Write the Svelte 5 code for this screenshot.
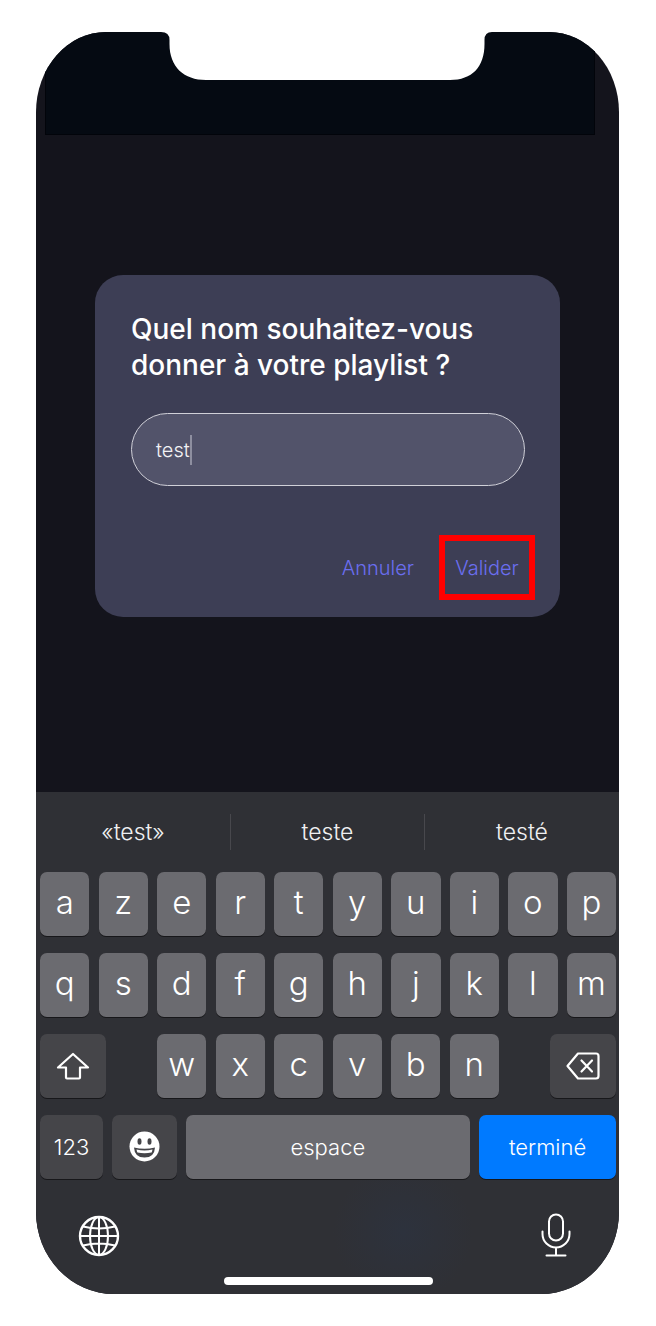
<script>
	const row1 = ['a', 'z', 'e', 'r', 't', 'y', 'u', 'i', 'o', 'p'];
	const row2 = ['q', 's', 'd', 'f', 'g', 'h', 'j', 'k', 'l', 'm'];
	const row3 = ['w', 'x', 'c', 'v', 'b', 'n'];
</script>

<div class="phone">
	<div class="status"></div>
	<svg class="notch" width="583" height="50" viewBox="0 0 583 50">
		<path d="M125 0Q133.500 0 133.500 8V12C133.500 35 148 48 170 48H414C436 48 448.500 35 448.500 12V8Q448.500 0 456 0Z" fill="#fff" />
	</svg>

	<main class="content">
		<section class="dialog">
			<h1>Quel nom souhaitez-vous<br />donner à votre playlist ?</h1>
			<div class="field"><span>test</span><i class="caret"></i></div>
			<div class="actions">
				<button type="button" class="annuler">Annuler</button>
				<button type="button" class="valider">Valider</button>
			</div>
		</section>
	</main>

	<footer class="keyboard">
		<div class="suggestions">
			<span>«test»</span>
			<span class="mid">teste</span>
			<span>testé</span>
		</div>

		<div class="rows">
			<div class="row">
				{#each row1 as k}
					<div class="key">{k}</div>
				{/each}
			</div>
			<div class="row">
				{#each row2 as k}
					<div class="key">{k}</div>
				{/each}
			</div>
			<div class="row between">
				<div class="key dark wide">
					<svg width="34" height="28" viewBox="0 0 34 28" fill="none" stroke="#fff" stroke-width="2.200" stroke-linejoin="round">
						<path d="M17 2 2 15.500H10V25.500Q10 26.500 11 26.500H23Q24 26.500 24 25.500V15.500H32Z" />
					</svg>
				</div>
				<div class="letters">
					{#each row3 as k}
						<div class="key">{k}</div>
					{/each}
				</div>
				<div class="key dark wide">
					<svg width="34" height="28" viewBox="0 0 34 28" fill="none" stroke="#fff" stroke-width="2.200" stroke-linejoin="round" stroke-linecap="round">
						<path d="M12 1.500H30Q32.500 1.500 32.500 4V24Q32.500 26.500 30 26.500H12L1.500 14Z" />
						<path d="M15.500 8.500 26 19.500M26 8.500 15.500 19.500" />
					</svg>
				</div>
			</div>
			<div class="row bottom">
				<div class="key dark small num">123</div>
				<div class="key dark emoji">
					<svg width="31" height="31" viewBox="0 0 31 31">
						<circle cx="15.500" cy="15.500" r="15" fill="#fff" />
						<ellipse cx="10.500" cy="10.500" rx="2" ry="3.200" fill="#454549" />
						<ellipse cx="20.500" cy="10.500" rx="2" ry="3.200" fill="#454549" />
						<path d="M5 16.500Q15.500 19 26 16.500Q25.500 26.500 15.500 26.500Q5.500 26.500 5 16.500Z" fill="#454549" />
						<path d="M7.500 18.500Q15.500 20.500 23.500 18.500Q23 21 22.500 21.500Q15.500 23 8.500 21.500Q8 21 7.500 18.500Z" fill="#fff" />
					</svg>
				</div>
				<div class="key small space">espace</div>
				<div class="key small done">terminé</div>
			</div>
		</div>

		<div class="tools">
			<svg width="42" height="42" viewBox="0 0 42 42" fill="none" stroke="#fff" stroke-width="2">
				<circle cx="21" cy="21" r="19" stroke-width="2.400" />
				<ellipse cx="21" cy="21" rx="9" ry="19" />
				<path d="M21 2V40M2 21H40M5 11.500Q21 15.500 37 11.500M5 30.500Q21 26.500 37 30.500" />
			</svg>
			<svg width="30" height="44" viewBox="0 0 30 44" fill="none" stroke="#fff" stroke-width="2" stroke-linecap="round">
				<rect x="8" y="1.500" width="14" height="26" rx="7" />
				<path d="M1.500 18.500V21A13.500 13.500 0 0 0 28.500 21V18.500M15 34.500V42M5.500 42.500H24.500" />
			</svg>
		</div>
		<div class="home"></div>
	</footer>
</div>

<style>
	:global(body) {
		background: #fff;
	}

	.phone {
		position: relative;
		display: flex;
		flex-direction: column;
		width: 583px;
		height: 1262px;
		margin: 32px 0 0 36px;
		background: #14141c;
		border-radius: 70px 70px 78px 78px / 80px 80px 82px 82px;
		overflow: hidden;
		font-family: Inter, 'Liberation Sans', sans-serif;
	}

	.status {
		flex: none;
		height: 103px;
		margin: 0 24px 0 9px;
		background: #050a12;
		border: 1px solid #02040a;
		border-top: none;
		box-sizing: border-box;
	}

	.notch {
		position: absolute;
		top: 0;
		left: 0;
	}

	.content {
		flex: 1;
		padding: 140px 0 0 59px;
	}

	.dialog {
		box-sizing: border-box;
		width: 465px;
		height: 342px;
		padding: 36px 36px 0;
		background: #3d3e55;
		border-radius: 28px;
	}

	h1 {
		margin: 0;
		color: #fff;
		font-size: 28px;
		font-weight: 500;
		line-height: 36px;
		white-space: nowrap;
	}

	.field {
		display: flex;
		align-items: center;
		box-sizing: border-box;
		width: 394px;
		height: 73px;
		margin-top: 30px;
		padding-left: 24px;
		background: #52536a;
		border: 1px solid #d0d0d8;
		border-radius: 37px;
		color: #f2f2f5;
		font-size: 20px;
		font-weight: 300;
	}

	.caret {
		width: 2px;
		height: 30px;
		background: #8e8fa0;
	}

	.actions {
		display: flex;
		justify-content: flex-end;
		align-items: center;
		margin: 49px -11px 0 0;
	}

	.actions button {
		box-sizing: border-box;
		height: 65px;
		padding: 0;
		background: none;
		border: none;
		color: #6b6ef0;
		font: 300 20px Inter, 'Liberation Sans', sans-serif;
	}

	.annuler {
		margin-right: 25px;
	}

	.valider {
		width: 96px;
		border: 6px solid #f00 !important;
	}

	.keyboard {
		flex: none;
		height: 502px;
		background: radial-gradient(circle 70px at 367px 440px, #2d323d, transparent), #2f3035;
		color: #fff;
	}

	.suggestions {
		display: grid;
		grid-template-columns: 194px 195px 194px;
		align-items: center;
		height: 80px;
		color: #f0f0f2;
		font-size: 23px;
		font-weight: 300;
		text-align: center;
	}

	.suggestions span {
		line-height: 36px;
	}

	.suggestions .mid {
		border-left: 1px solid #48484d;
		border-right: 1px solid #48484d;
	}

	.rows {
		display: flex;
		flex-direction: column;
		gap: 17.500px;
		padding: 0 3px 0 4px;
	}

	.row {
		display: flex;
		gap: 9.100px;
		height: 63.500px;
	}

	.between {
		justify-content: space-between;
	}

	.letters {
		display: flex;
		gap: 9.100px;
	}

	.letters .key {
		width: 49.400px;
		flex: none;
	}

	.key {
		display: flex;
		flex: 1;
		align-items: center;
		justify-content: center;
		padding-bottom: 3px;
		box-sizing: border-box;
		background: #6b6b70;
		border-radius: 7px;
		box-shadow: 0 1px 0 #17171a;
		font-size: 33px;
		font-weight: 300;
	}

	.dark {
		background: #454549;
	}

	.wide {
		flex: none;
		width: 66px;
		padding: 0;
	}

	.small {
		font-size: 22px;
		padding: 0;
	}

	.bottom {
		gap: 9.200px;
	}

	.num {
		flex: none;
		width: 63px;
	}

	.emoji {
		flex: none;
		width: 64.500px;
		padding: 0;
	}

	.space {
		flex: none;
		width: 284px;
	}

	.done {
		flex: none;
		width: 137px;
		background: #007aff;
	}

	.tools {
		display: flex;
		justify-content: space-between;
		align-items: flex-end;
		height: 43px;
		margin-top: 35px;
		padding: 0 48px 0 42px;
	}

	.home {
		width: 209px;
		height: 8px;
		margin: 20px auto 0;
		background: #fff;
		border-radius: 4px;
		transform: translateX(1px);
	}
</style>
